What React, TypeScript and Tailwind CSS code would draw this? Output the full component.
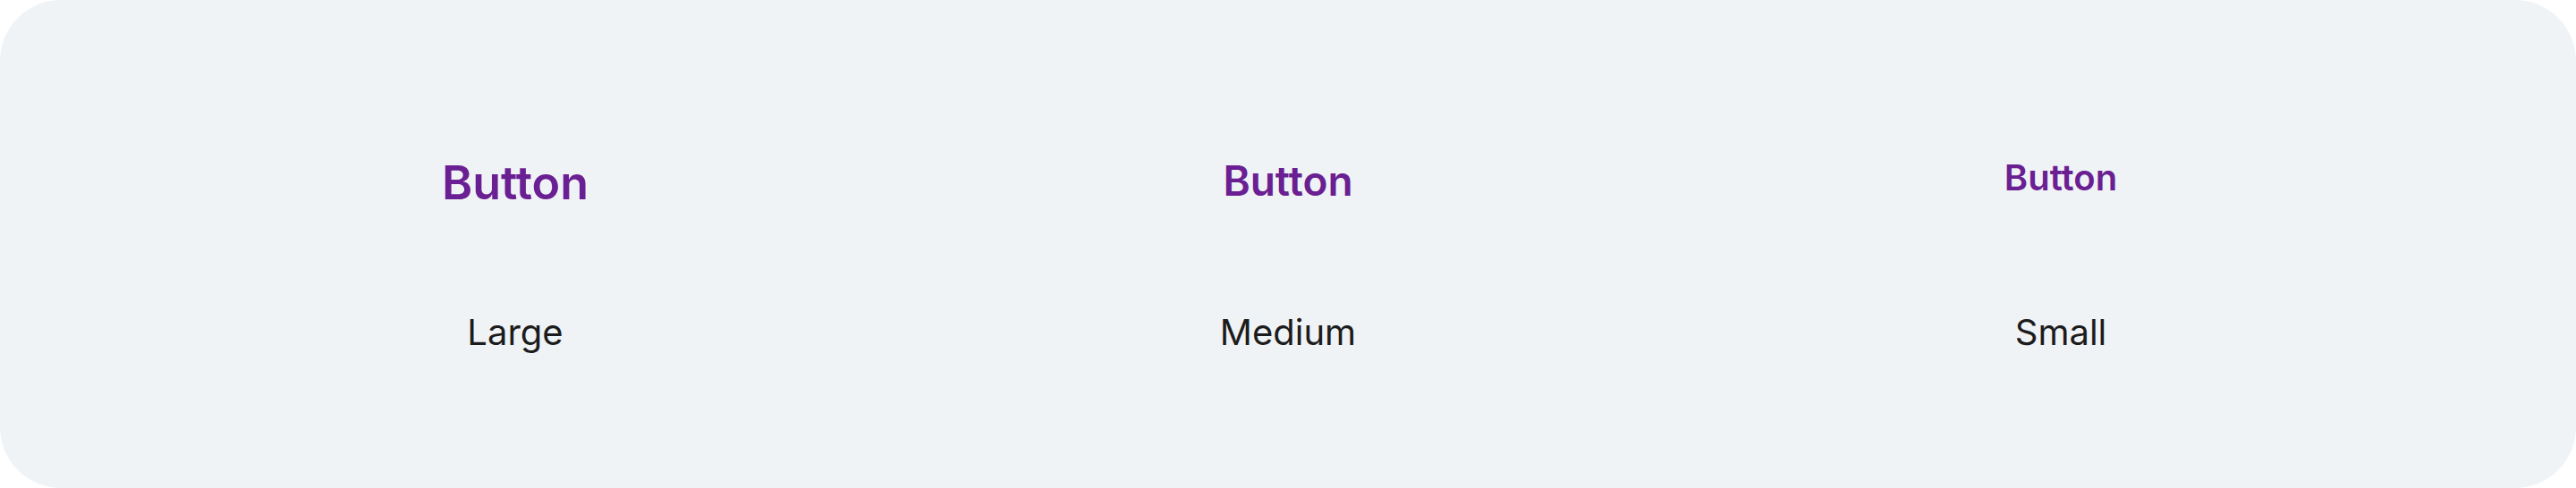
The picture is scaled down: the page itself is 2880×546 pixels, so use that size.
const sizes = [
  { label: "Large", text: "text-[52px]" },
  { label: "Medium", text: "text-[46px]" },
  { label: "Small", text: "text-[40px]" },
];

export default function App() {
  return (
    <div className="w-[2880px] h-[546px] bg-white font-['Inter',sans-serif]">
      <div className="h-full rounded-[68px] bg-[#f0f3f6] grid grid-cols-3 px-[144px]">
        {sizes.map((s) => (
          <div key={s.label} className="flex flex-col items-center">
            <div className="h-[352px] pt-[179px]">
              <button className={`${s.text} leading-none font-semibold text-[#6a1f92]`}>
                Button
              </button>
            </div>
            <span className="text-[40px] leading-none text-[#1c1c1c]">{s.label}</span>
          </div>
        ))}
      </div>
    </div>
  );
}
